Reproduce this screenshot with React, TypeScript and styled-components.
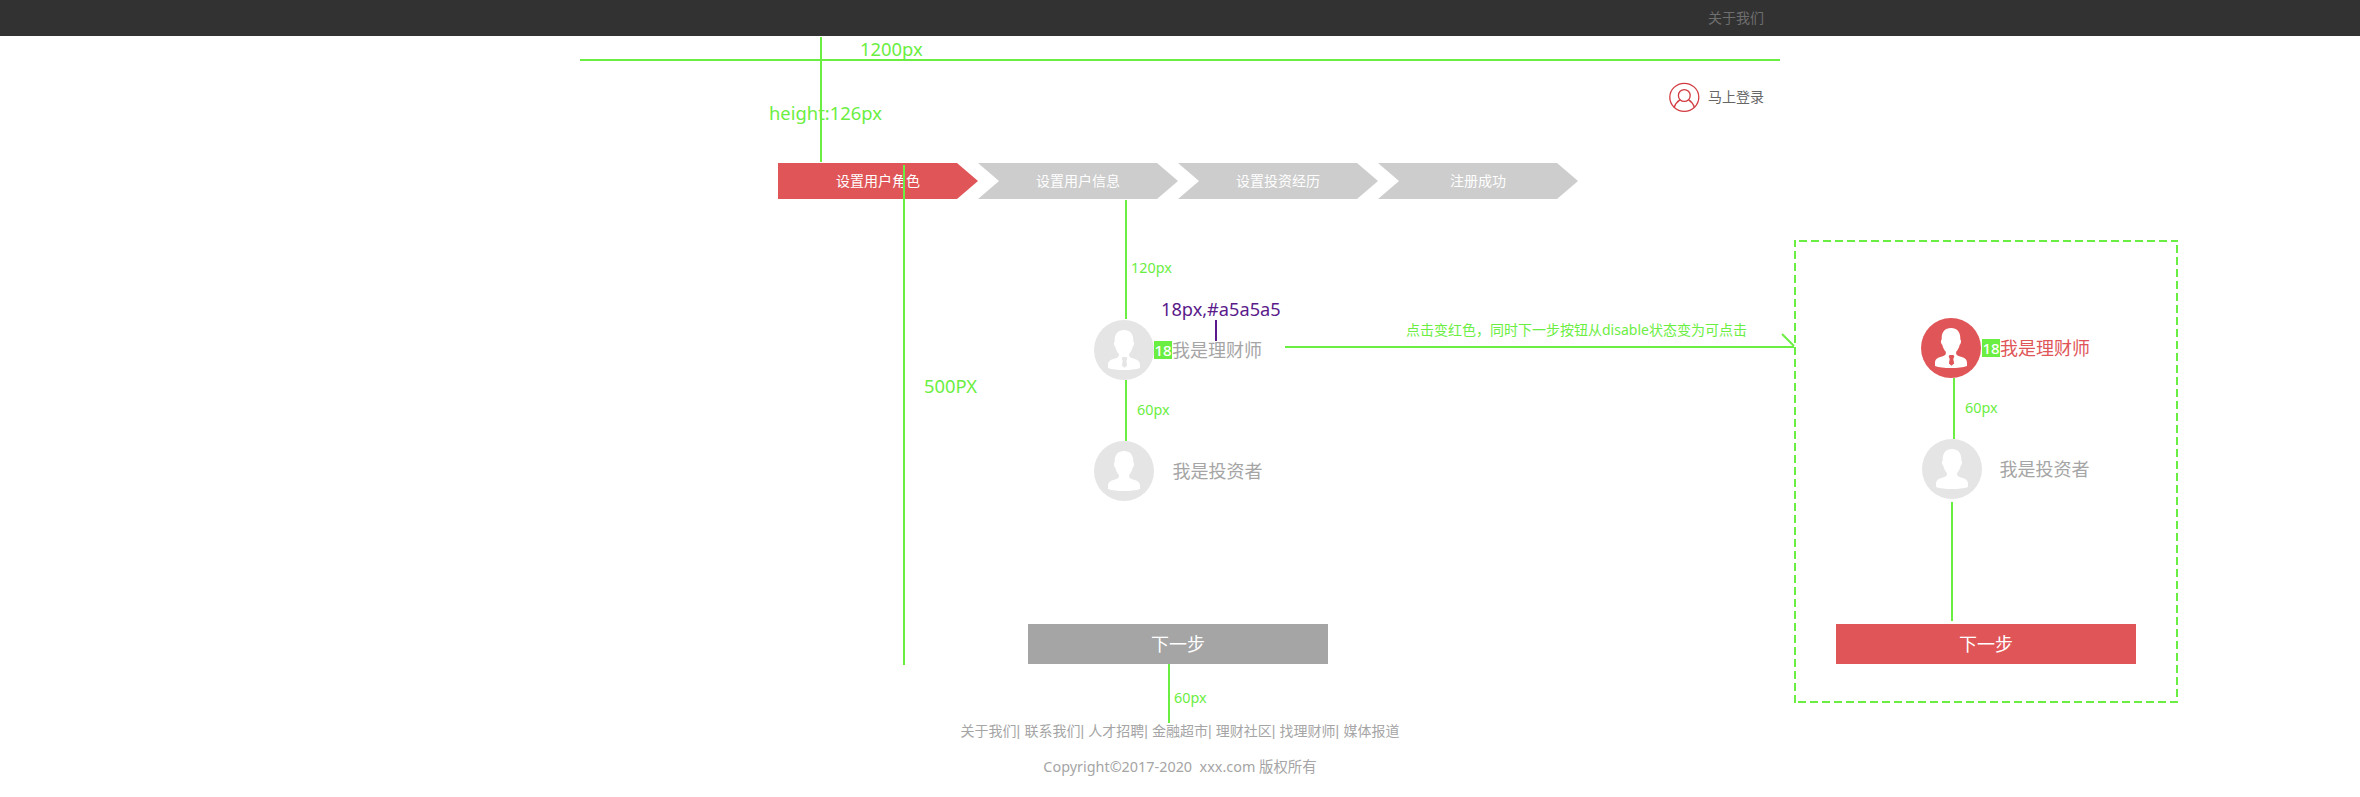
import React from "react";
import styled, { createGlobalStyle } from "styled-components";

const GREEN = "#6bee42";
const RED = "#e05658";
const GREY = "#a5a5a5";

const GlobalStyle = createGlobalStyle`
  * { box-sizing: border-box; }
  body {
    margin: 0;
    background: #fff;
    font-family: "Noto Sans", "Noto Sans CJK SC", sans-serif;
    font-size: 14px;
    line-height: 20px;
  }
`;

const Page = styled.div`
  position: relative;
  width: 2360px;
  height: 797px;
  overflow: hidden;
`;

const TopBar = styled.header`
  display: flex;
  align-items: center;
  justify-content: flex-end;
  height: 36px;
  padding-right: 596px;
  background: #323232;
  color: #6e6e6e;
`;

const LoginRow = styled.div`
  display: flex;
  align-items: center;
  justify-content: flex-end;
  gap: 8px;
  height: 127px;
  padding: 0 596px 5px 0;
  color: #666;
`;

const Main = styled.main`
  display: flex;
  flex-direction: column;
  width: 800px;
  height: 501px;
  margin-left: 778px;
`;

const Steps = styled.ol`
  display: flex;
  margin: 0;
  padding: 0;
  list-style: none;
`;

const Step = styled.li<{ $active?: boolean }>`
  display: flex;
  align-items: center;
  justify-content: center;
  width: 200px;
  height: 36px;
  color: #fff;
  background: ${(p) => (p.$active ? RED : "#cdcdcd")};
  clip-path: ${(p) =>
    p.$active
      ? "polygon(0 0, 179px 0, 100% 50%, 179px 100%, 0 100%)"
      : "polygon(0 0, 179px 0, 100% 50%, 179px 100%, 0 100%, 21px 50%)"};
`;

const Roles = styled.div<{ $top: number; $left: number }>`
  display: flex;
  flex-direction: column;
  gap: 61px;
  margin: ${(p) => p.$top}px 0 0 ${(p) => p.$left}px;
`;

const RoleRow = styled.div<{ $active?: boolean; $shift?: number }>`
  display: flex;
  align-items: center;
  height: 60px;
  padding-left: ${(p) => p.$shift || 0}px;
  font-size: 18px;
  line-height: 26px;
  color: ${(p) => (p.$active ? RED : GREY)};
`;

const RoleName = styled.span<{ $gap: number }>`
  margin-left: ${(p) => p.$gap}px;
`;

const SpacingBadge = styled.span<{ $gap: number }>`
  display: flex;
  align-items: center;
  justify-content: center;
  width: 18px;
  height: 18px;
  margin-left: ${(p) => p.$gap}px;
  background: ${GREEN};
  color: #fff;
  font-size: 15px;
  font-weight: 500;
  line-height: 18px;
`;

const NextButton = styled.button<{ $active?: boolean }>`
  width: 300px;
  height: 40px;
  margin: auto auto 0;
  padding: 0;
  border: 0;
  background: ${(p) => (p.$active ? RED : GREY)};
  color: #fff;
  font: inherit;
  font-size: 18px;
  line-height: 40px;
`;

const Footer = styled.footer`
  display: flex;
  flex-direction: column;
  align-items: center;
  gap: 16px;
  padding-top: 57px;
  color: ${GREY};
`;

const FooterLinks = styled.nav`
  display: flex;
`;

const Divider = styled.span`
  width: 7.8px;
  font-family: "Liberation Sans", sans-serif;
`;

const Copyright = styled.p`
  margin: 0;
  font-size: 14.4px;
  white-space: pre;
`;

/* Second state of the form, pinned beside the page as a design note. */
const StatePanel = styled.section`
  position: absolute;
  left: 1794px;
  top: 240px;
  display: flex;
  flex-direction: column;
  width: 384px;
  height: 463px;
  padding-bottom: 39px;
`;

const PanelOutline = styled.svg`
  position: absolute;
  left: 0;
  top: 0;
`;

const Rule = styled.i<{ $x: number; $y: number; $w?: number; $h?: number; $color?: string }>`
  position: absolute;
  left: ${(p) => p.$x}px;
  top: ${(p) => p.$y}px;
  width: ${(p) => p.$w || 2}px;
  height: ${(p) => p.$h || 2}px;
  background: ${(p) => p.$color || GREEN};
`;

const Note = styled.span<{ $x: number; $y: number; $size?: number; $color?: string }>`
  position: absolute;
  left: ${(p) => p.$x}px;
  top: ${(p) => p.$y}px;
  color: ${(p) => p.$color || GREEN};
  font-size: ${(p) => p.$size || 14.4}px;
  line-height: ${(p) => ((p.$size || 14) > 18 ? 26 : 20)}px;
  white-space: nowrap;
`;

const ArrowHead = styled.svg`
  position: absolute;
  left: 1780px;
  top: 332px;
`;

function Avatar({ active, tie }: { active?: boolean; tie?: boolean }) {
  const fill = active ? RED : "#e5e5e5";
  return (
    <svg width="60" height="60" viewBox="0 0 60 60">
      <circle cx="30" cy="30" r="30" fill={fill} />
      <path
        fill="#fff"
        d="M30 10c6 0 9.300 4 9.300 10v1.500c1.200.6.900 4.200-.6 5.200-.7 3.300-2 5.300-3.500 7.100-.5 2.600.6 3.700 3 4.500C43 39.700 46 40.500 46 45v3c-4 1.400-9.500 2-16 2s-12-.6-16-2v-3c0-4.500 3-5.300 7.800-6.700 2.400-.8 3.500-1.900 3-4.500-1.500-1.800-2.800-3.800-3.500-7.100-1.500-1-1.800-4.600-.6-5.200V20c0-6 3.300-10 9.300-10z"
      />
      {tie && (
        <path fill={fill} d="M28.500 37h4l.8 1.500-1 2.500.8 4.500-2.600 2.300-2.600-2.300.8-4.500-1-2.500z" />
      )}
    </svg>
  );
}

function LoginIcon() {
  return (
    <svg width="31" height="30" viewBox="0 0 31 30" fill="none" stroke="#d23c40" strokeWidth="1.300">
      <ellipse cx="15.300" cy="15.300" rx="14.500" ry="14" />
      <circle cx="15.300" cy="13.500" r="5.900" />
      <path d="M5.300 25.200c.8-2.700 2.600-5.300 5.600-7.300M25.300 25.200c-.8-2.700-2.600-5.300-5.600-7.300" />
    </svg>
  );
}

const steps = ["设置用户角色", "设置用户信息", "设置投资经历", "注册成功"];
const links = ["关于我们", "联系我们", "人才招聘", "金融超市", "理财社区", "找理财师", "媒体报道"];

export default function App() {
  return (
    <Page>
      <GlobalStyle />
      <TopBar>关于我们</TopBar>
      <LoginRow>
        <LoginIcon />
        <span>马上登录</span>
      </LoginRow>
      <Main>
        <Steps>
          {steps.map((s, i) => (
            <Step key={s} $active={i === 0}>{s}</Step>
          ))}
        </Steps>
        <Roles $top={121} $left={316}>
          <RoleRow>
            <Avatar tie />
            <SpacingBadge $gap={0}>18</SpacingBadge>
            <RoleName $gap={0}>我是理财师</RoleName>
          </RoleRow>
          <RoleRow>
            <Avatar />
            <RoleName $gap={18.5}>我是投资者</RoleName>
          </RoleRow>
        </Roles>
        <NextButton>下一步</NextButton>
      </Main>
      <Footer>
        <FooterLinks>
          {links.map((l, i) => (
            <React.Fragment key={l}>
              {i > 0 && <Divider>|</Divider>}
              <span>{l}</span>
            </React.Fragment>
          ))}
        </FooterLinks>
        <Copyright>{"Copyright©2017-2020  xxx.com 版权所有"}</Copyright>
      </Footer>

      <StatePanel>
        <PanelOutline
          width="384"
          height="463"
          fill="none"
          stroke={GREEN}
          strokeWidth="2"
          strokeDasharray="8 4"
        >
          <path d="M5 1H384" />
          <path d="M383 -7V463" />
          <path d="M4 462H384" />
          <path d="M1 -1V463" />
        </PanelOutline>
        <Roles $top={78} $left={127}>
          <RoleRow $active>
            <Avatar active tie />
            <SpacingBadge $gap={1}>18</SpacingBadge>
            <RoleName $gap={0}>我是理财师</RoleName>
          </RoleRow>
          <RoleRow $shift={1}>
            <Avatar />
            <RoleName $gap={17.5}>我是投资者</RoleName>
          </RoleRow>
        </Roles>
        <NextButton $active>下一步</NextButton>
      </StatePanel>

      <Rule $x={580} $y={59} $w={1200} />
      <Rule $x={820} $y={37} $h={125} />
      <Rule $x={903} $y={165} $h={500} />
      <Rule $x={1125} $y={200} $h={119} />
      <Rule $x={1125} $y={380} $h={61} />
      <Rule $x={1168} $y={664} $h={59} />
      <Rule $x={1285} $y={346} $w={509} />
      <Rule $x={1953} $y={378} $h={61} />
      <Rule $x={1951} $y={502} $h={119} />
      <Rule $x={1215} $y={320} $h={21} $color="#5a1a8a" />
      <ArrowHead width="16" height="16" fill="none" stroke={GREEN} strokeWidth="2">
        <path d="M2 2L14 14" />
      </ArrowHead>
      <Note $x={860} $y={36} $size={18.4}>1200px</Note>
      <Note $x={769} $y={100} $size={18.4}>height:126px</Note>
      <Note $x={924} $y={373} $size={18.4}>500PX</Note>
      <Note $x={1161} $y={296} $size={18.2} $color="#5a1a8a">18px,#a5a5a5</Note>
      <Note $x={1131} $y={258}>120px</Note>
      <Note $x={1137} $y={400}>60px</Note>
      <Note $x={1965} $y={398}>60px</Note>
      <Note $x={1174} $y={688}>60px</Note>
      <Note $x={1406} $y={320} $size={14}>点击变红色，同时下一步按钮从disable状态变为可点击</Note>
    </Page>
  );
}
